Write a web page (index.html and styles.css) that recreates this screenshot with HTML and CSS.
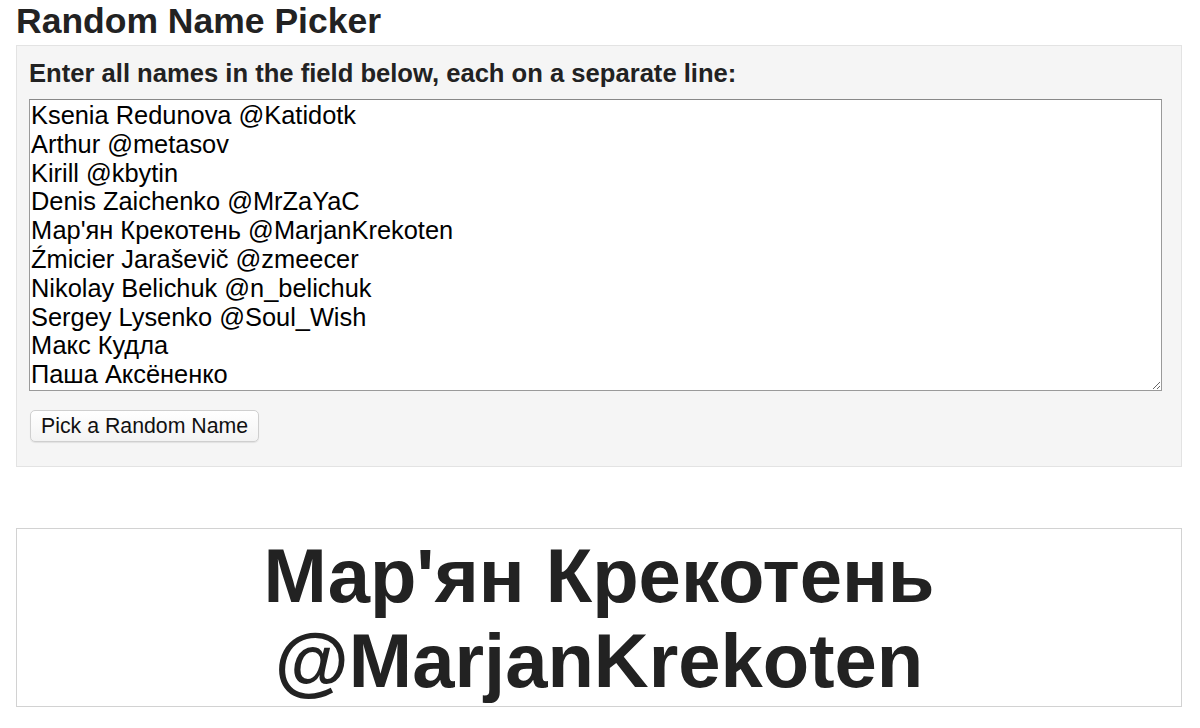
FILE: index.html
```html
<!DOCTYPE html>
<html lang="en">

<head>
    <meta charset="UTF-8">
    <meta name="viewport" content="width=device-width, initial-scale=1.0">
    <title>Random Name Picker</title>
    <link rel="stylesheet" href="styles.css">
</head>

<body>

    <h1>Random Name Picker</h1>

    <div class="picker">
        <label for="names">Enter all names in the field below, each on a separate line:</label>
        <textarea id="names" rows="10">Ksenia Redunova @Katidotk
Arthur @metasov
Kirill @kbytin
Denis Zaichenko @MrZaYaC
Мар'ян Крекотень @MarjanKrekoten
Źmicier Jaraševič @zmeecer
Nikolay Belichuk @n_belichuk
Sergey Lysenko @Soul_Wish
Макс Кудла
Паша Аксёненко</textarea>
        <button type="button" id="pick">Pick a Random Name</button>
    </div>

    <div class="result" id="result">Мар'ян Крекотень<br>@MarjanKrekoten</div>

</body>

</html>
```

FILE: styles.css
```css
body {
    font-family: 'Liberation Sans', Arial, sans-serif;
    color: #222;
    margin: 0;
    padding: 0 18px 0 16px;
    background-color: #fff;
}

h1 {
    font-size: 35.5px;
    line-height: 40px;
    margin: 1px 0 4px 0;
    color: #222;
}

.picker {
    background-color: #f5f5f5;
    border: 1px solid #e3e3e3;
    padding: 13px 11px 24px 12px;
}

.picker label {
    display: block;
    font-weight: bold;
    font-size: 25.6px;
    line-height: 29px;
    margin-bottom: 11px;
}

.picker textarea {
    display: block;
    box-sizing: border-box;
    width: 1133px;
    height: 292px;
    margin: 0;
    padding: 1px 1px;
    font-family: 'Liberation Sans', Arial, sans-serif;
    font-size: 25.4px;
    line-height: 28.8px;
    color: #000;
    background-color: #fff;
    border: 1px solid #9a9a9a;
    border-top-color: #888;
    overflow: hidden;
}

.picker button {
    display: block;
    margin-top: 19px;
    margin-left: 1px;
    padding: 3px 10px 3px 10px;
    font-family: 'Liberation Sans', Arial, sans-serif;
    font-size: 21.3px;
    line-height: 24px;
    color: #111;
    background: linear-gradient(#ffffff, #f3f3f3);
    border: 1px solid #cfcfcf;
    border-radius: 5px;
    box-shadow: 0 1px 1px rgba(0, 0, 0, 0.08);
    cursor: pointer;
}

.result {
    margin-top: 61px;
    border: 1px solid #d2d2d2;
    background-color: #fff;
    text-align: center;
    font-weight: bold;
    font-size: 76px;
    line-height: 85px;
    padding: 4px 0 3px 0;
    color: #222;
}
```
